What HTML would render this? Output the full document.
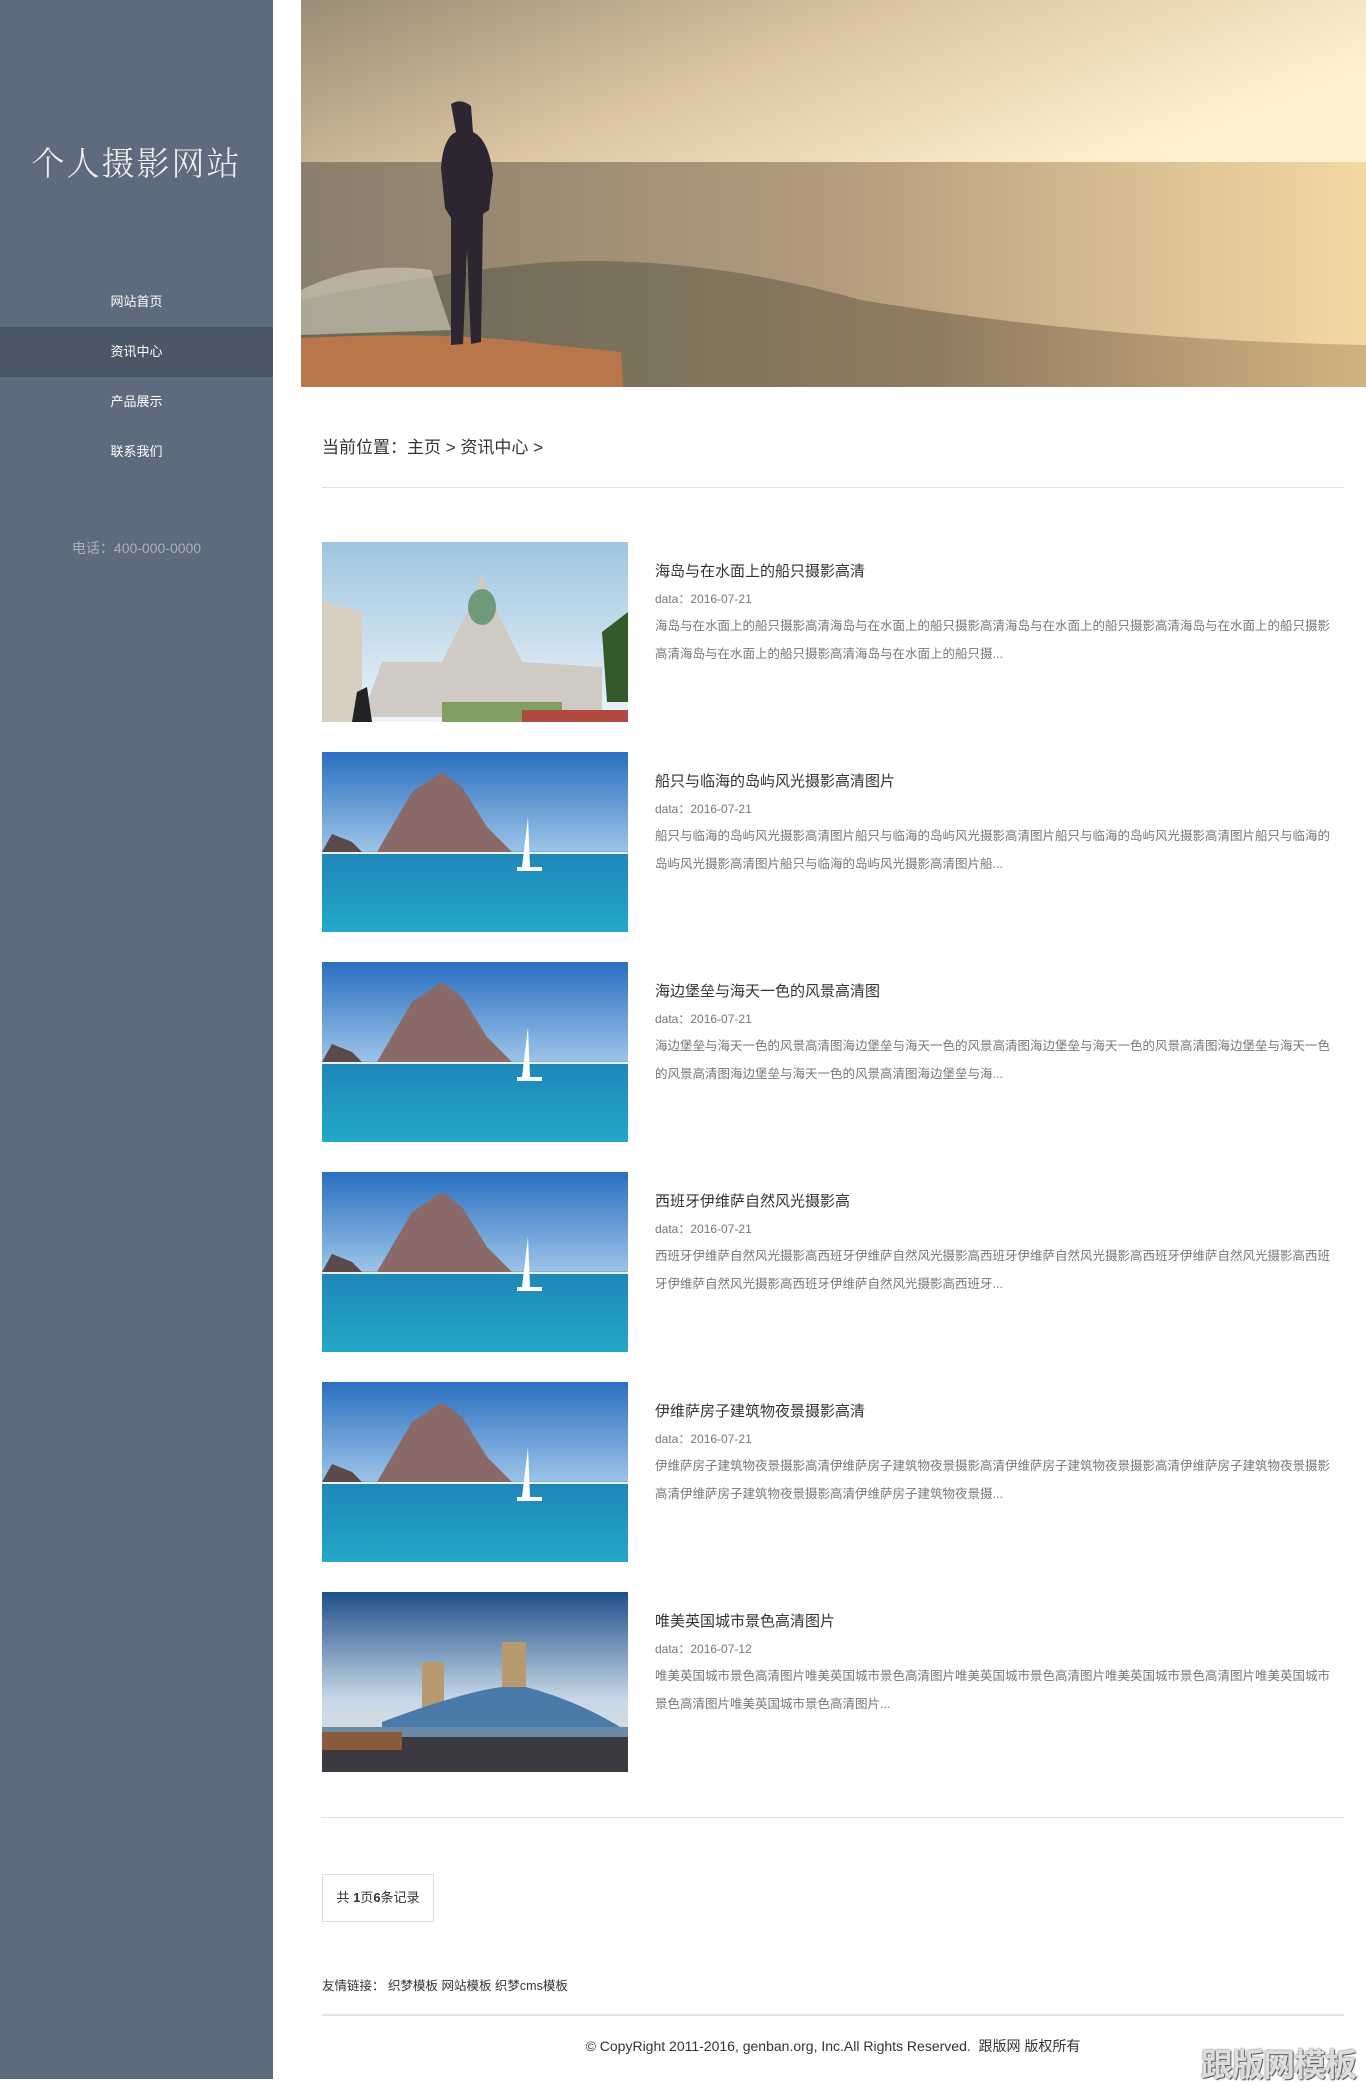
<!DOCTYPE html>
<html><head><meta charset="utf-8">
<style>
*{margin:0;padding:0;box-sizing:border-box}
body{width:1366px;height:2079px;position:relative;background:#fff;font-family:"Liberation Sans","Noto Sans CJK SC",sans-serif;overflow:hidden}
.side{position:absolute;left:0;top:0;width:273px;height:2079px;background:#5e6a7d}
.logo{position:absolute;left:0;width:273px;top:138px;text-align:center;color:#f2f2f2;font-size:33px;font-family:"Noto Serif CJK SC",serif;font-weight:300;letter-spacing:2px}
.nav{position:absolute;top:277px;left:0;width:273px}
.nav div{height:50px;line-height:50px;text-align:center;color:#fff;font-size:13px}
.nav .on{background:#4b5666}
.tel{position:absolute;top:538px;width:273px;text-align:center;color:#a9b0bb;font-size:14px}
.hero{position:absolute;left:301px;top:0;width:1065px;height:387px}
.bc{position:absolute;left:322px;top:433px;font-size:17px;color:#333}
.hl{position:absolute;left:322px;width:1022px;height:1px;background:#e2e2e2}
.item{position:absolute;left:322px;width:1022px;height:180px}
.item svg{position:absolute;left:0;top:0}
.item h3{position:absolute;left:333px;top:18px;font-size:15px;font-weight:normal;color:#333}
.item .d{position:absolute;left:333px;top:48px;font-size:12px;color:#777}
.item p{position:absolute;left:333px;top:70px;width:680px;font-size:12.5px;line-height:28px;color:#777}
.pg{position:absolute;left:322px;top:1874px;width:112px;height:48px;border:1px solid #ddd;font-size:13px;line-height:46px;text-align:center;color:#333}
.fl{position:absolute;left:322px;top:1975px;font-size:12.5px;color:#333}
.cp{position:absolute;left:322px;width:1022px;top:2036px;text-align:center;font-size:14px;color:#333}
.wm{position:absolute;right:10px;top:2040px;font-size:32px;font-weight:bold;color:#ddd;text-shadow:0 0 2px #555,1px 1px 0 #666;letter-spacing:-1px}
</style></head><body>
<div class="side">
<div class="logo">个人摄影网站</div>
<div class="nav"><div>网站首页</div><div class="on">资讯中心</div><div>产品展示</div><div>联系我们</div></div>
<div class="tel">电话：400-000-0000</div>
</div>
<svg class="hero" viewBox="0 0 1065 387" preserveAspectRatio="none">
<defs>
<linearGradient id="sky" x1="0" y1="0" x2="1" y2="0.4"><stop offset="0" stop-color="#9a8c76"/><stop offset="0.5" stop-color="#dcc6a2"/><stop offset="1" stop-color="#fff1cf"/></linearGradient>
<linearGradient id="sea" x1="0" y1="0" x2="1" y2="0"><stop offset="0" stop-color="#8a7e6e"/><stop offset="0.5" stop-color="#b39c7c"/><stop offset="1" stop-color="#f4d9a4"/></linearGradient>
<linearGradient id="wave" x1="0" y1="0" x2="1" y2="0"><stop offset="0" stop-color="#5d6252"/><stop offset="0.6" stop-color="#806e55"/><stop offset="1" stop-color="#c8a575"/></linearGradient>
</defs>
<rect width="1065" height="165" fill="url(#sky)"/>
<rect y="162" width="1065" height="225" fill="url(#sea)"/>
<path d="M0 300 Q150 270 250 262 Q400 255 560 300 Q800 340 1065 345 L1065 387 L0 387Z" fill="url(#wave)" opacity="0.75"/>
<path d="M0 290 Q60 260 130 270 L150 330 L0 335Z" fill="#d8d0bf" opacity="0.6"/>
<path d="M0 338 Q150 330 250 345 L320 352 L322 387 L0 387Z" fill="#b8764a"/>
<path d="M150 104 Q160 98 170 106 L172 132 Q188 140 192 175 L188 210 L182 214 L180 342 L170 344 L166 250 L162 344 L150 345 L150 218 L144 208 L140 168 Q142 138 155 132Z" fill="#2b2630"/>
</svg>
<div class="bc">当前位置：主页 &gt; 资讯中心 &gt;</div>
<div class="hl" style="top:487px"></div>

<div class="item" style="top:542px">
<svg width="306" height="180" viewBox="0 0 306 180"><defs><linearGradient id="c1" x1="0" y1="0" x2="0" y2="1"><stop offset="0" stop-color="#9ec6e0"/><stop offset="1" stop-color="#eef4f8"/></linearGradient></defs><rect width="306" height="180" fill="url(#c1)"/><path d="M0 60 L40 70 L40 180 L0 180Z" fill="#d8cfc0"/><path d="M120 120 L150 60 L160 30 L170 60 L200 120 L280 125 L280 175 L40 175 L60 120Z" fill="#cfcac4"/><ellipse cx="160" cy="65" rx="14" ry="18" fill="#6f9a7a"/><rect x="120" y="160" width="120" height="20" fill="#7fa060"/><rect x="200" y="168" width="106" height="12" fill="#b04a3e"/><path d="M280 90 L306 70 L306 160 L285 160Z" fill="#345a2a"/><path d="M30 180 L35 150 L45 145 L50 180Z" fill="#222"/></svg>
<h3>海岛与在水面上的船只摄影高清</h3><div class="d">data：2016-07-21</div>
<p>海岛与在水面上的船只摄影高清海岛与在水面上的船只摄影高清海岛与在水面上的船只摄影高清海岛与在水面上的船只摄影高清海岛与在水面上的船只摄影高清海岛与在水面上的船只摄...</p></div>

<div class="item" style="top:752px">
<svg width="306" height="180" viewBox="0 0 306 180"><defs><linearGradient id="s" x1="0" y1="0" x2="0" y2="1"><stop offset="0" stop-color="#2a6fc0"/><stop offset="0.55" stop-color="#9cc3e8"/><stop offset="0.56" stop-color="#1f86b8"/><stop offset="1" stop-color="#23a8c8"/></linearGradient></defs><rect width="306" height="180" fill="url(#s)"/><path d="M55 100 L90 40 L120 20 L140 35 L165 75 L190 100Z" fill="#8a6a68"/><path d="M0 100 L10 82 L30 90 L40 100Z" fill="#5a4a4a"/><rect y="100" width="306" height="2" fill="#e8f0f0"/><path d="M200 115 L206 65 L208 115Z" fill="#fff"/><rect x="195" y="115" width="25" height="4" fill="#fff"/></svg>
<h3>船只与临海的岛屿风光摄影高清图片</h3><div class="d">data：2016-07-21</div>
<p>船只与临海的岛屿风光摄影高清图片船只与临海的岛屿风光摄影高清图片船只与临海的岛屿风光摄影高清图片船只与临海的岛屿风光摄影高清图片船只与临海的岛屿风光摄影高清图片船...</p></div>

<div class="item" style="top:962px">
<svg width="306" height="180" viewBox="0 0 306 180"><rect width="306" height="180" fill="url(#s)"/><path d="M55 100 L90 40 L120 20 L140 35 L165 75 L190 100Z" fill="#8a6a68"/><path d="M0 100 L10 82 L30 90 L40 100Z" fill="#5a4a4a"/><rect y="100" width="306" height="2" fill="#e8f0f0"/><path d="M200 115 L206 65 L208 115Z" fill="#fff"/><rect x="195" y="115" width="25" height="4" fill="#fff"/></svg>
<h3>海边堡垒与海天一色的风景高清图</h3><div class="d">data：2016-07-21</div>
<p>海边堡垒与海天一色的风景高清图海边堡垒与海天一色的风景高清图海边堡垒与海天一色的风景高清图海边堡垒与海天一色的风景高清图海边堡垒与海天一色的风景高清图海边堡垒与海...</p></div>

<div class="item" style="top:1172px">
<svg width="306" height="180" viewBox="0 0 306 180"><rect width="306" height="180" fill="url(#s)"/><path d="M55 100 L90 40 L120 20 L140 35 L165 75 L190 100Z" fill="#8a6a68"/><path d="M0 100 L10 82 L30 90 L40 100Z" fill="#5a4a4a"/><rect y="100" width="306" height="2" fill="#e8f0f0"/><path d="M200 115 L206 65 L208 115Z" fill="#fff"/><rect x="195" y="115" width="25" height="4" fill="#fff"/></svg>
<h3>西班牙伊维萨自然风光摄影高</h3><div class="d">data：2016-07-21</div>
<p>西班牙伊维萨自然风光摄影高西班牙伊维萨自然风光摄影高西班牙伊维萨自然风光摄影高西班牙伊维萨自然风光摄影高西班牙伊维萨自然风光摄影高西班牙伊维萨自然风光摄影高西班牙...</p></div>

<div class="item" style="top:1382px">
<svg width="306" height="180" viewBox="0 0 306 180"><rect width="306" height="180" fill="url(#s)"/><path d="M55 100 L90 40 L120 20 L140 35 L165 75 L190 100Z" fill="#8a6a68"/><path d="M0 100 L10 82 L30 90 L40 100Z" fill="#5a4a4a"/><rect y="100" width="306" height="2" fill="#e8f0f0"/><path d="M200 115 L206 65 L208 115Z" fill="#fff"/><rect x="195" y="115" width="25" height="4" fill="#fff"/></svg>
<h3>伊维萨房子建筑物夜景摄影高清</h3><div class="d">data：2016-07-21</div>
<p>伊维萨房子建筑物夜景摄影高清伊维萨房子建筑物夜景摄影高清伊维萨房子建筑物夜景摄影高清伊维萨房子建筑物夜景摄影高清伊维萨房子建筑物夜景摄影高清伊维萨房子建筑物夜景摄...</p></div>

<div class="item" style="top:1592px">
<svg width="306" height="180" viewBox="0 0 306 180"><defs><linearGradient id="t" x1="0" y1="0" x2="0" y2="1"><stop offset="0" stop-color="#1f4f8a"/><stop offset="0.6" stop-color="#c8d8e8"/><stop offset="1" stop-color="#e8e0d0"/></linearGradient></defs><rect width="306" height="180" fill="url(#t)"/><rect x="100" y="70" width="22" height="95" fill="#b89a70"/><rect x="180" y="50" width="24" height="115" fill="#b89a70"/><path d="M60 130 Q140 100 180 95 L204 95 Q260 110 306 140 L306 145 L60 135Z" fill="#4a7aa8"/><rect x="0" y="135" width="306" height="10" fill="#6a8aa8"/><rect x="0" y="145" width="306" height="35" fill="#3a3a40"/><rect x="0" y="140" width="80" height="18" fill="#8a5a3a"/></svg>
<h3>唯美英国城市景色高清图片</h3><div class="d">data：2016-07-12</div>
<p>唯美英国城市景色高清图片唯美英国城市景色高清图片唯美英国城市景色高清图片唯美英国城市景色高清图片唯美英国城市景色高清图片唯美英国城市景色高清图片...</p></div>

<div class="hl" style="top:1817px"></div>
<div class="pg">共 <b>1</b>页<b>6</b>条记录</div>
<div class="fl">友情链接： 织梦模板 网站模板 织梦cms模板</div>
<div class="hl" style="top:2014px;height:2px"></div>
<div class="cp">© CopyRight 2011-2016, genban.org, Inc.All Rights Reserved. &nbsp;跟版网 版权所有</div>
<div class="wm">跟版网模板</div>
</body></html>
